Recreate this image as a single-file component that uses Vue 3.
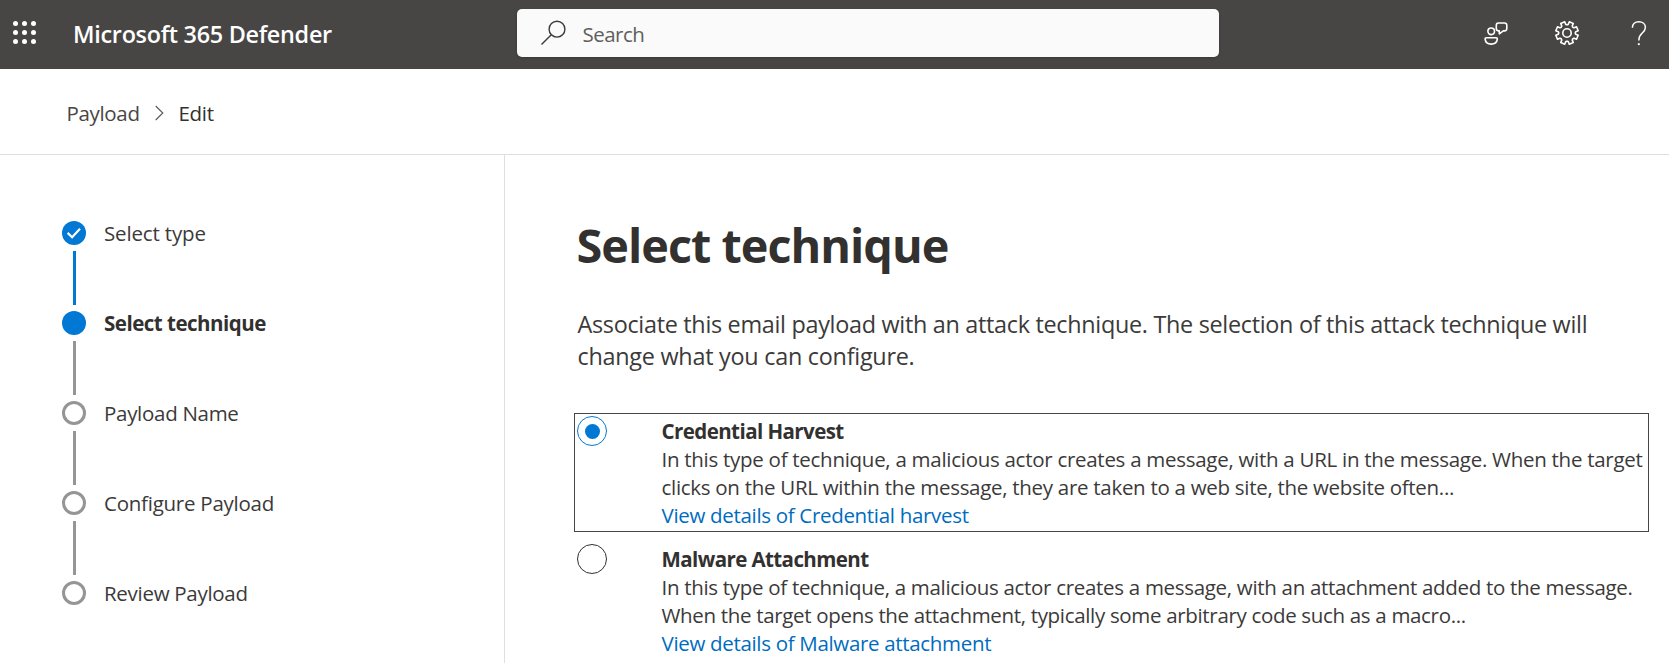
<script setup>
const steps = [
  { label: 'Select type', state: 'done', tracking: -0.16 },
  { label: 'Select technique', state: 'current', tracking: -0.5 },
  { label: 'Payload Name', state: 'todo', tracking: -0.29 },
  { label: 'Configure Payload', state: 'todo', tracking: -0.25 },
  { label: 'Review Payload', state: 'todo', tracking: -0.29 },
]

const intro = [
  { text: 'Associate this email payload with an attack technique. The selection of this attack technique will', tracking: -0.3 },
  { text: 'change what you can configure.', tracking: -0.26 },
]

const options = [
  {
    title: { text: 'Credential Harvest', tracking: -0.57 },
    lines: [
      { text: 'In this type of technique, a malicious actor creates a message, with a URL in the message. When the target', tracking: -0.28 },
      { text: 'clicks on the URL within the message, they are taken to a web site, the website often...', tracking: -0.29 },
    ],
    link: { text: 'View details of Credential harvest', tracking: -0.315 },
    checked: true,
  },
  {
    title: { text: 'Malware Attachment', tracking: -0.59 },
    lines: [
      { text: 'In this type of technique, a malicious actor creates a message, with an attachment added to the message.', tracking: -0.306 },
      { text: 'When the target opens the attachment, typically some arbitrary code such as a macro...', tracking: -0.325 },
    ],
    link: { text: 'View details of Malware attachment', tracking: -0.318 },
    checked: false,
  },
]

const spacing = (item) => ({ letterSpacing: item.tracking + 'px' })

// Outline of the settings gear: eight flat teeth around a 24px box.
const gearPath = (() => {
  const points = []
  for (let i = 0; i < 8; i++) {
    const mid = (i * Math.PI) / 4 + Math.PI / 8
    for (const [offset, r] of [[-0.34, 8.3], [-0.24, 8.9], [-0.19, 11.4], [0.19, 11.4], [0.24, 8.9], [0.34, 8.3]]) {
      points.push(`${(12 + r * Math.cos(mid + offset)).toFixed(2)} ${(12 + r * Math.sin(mid + offset)).toFixed(2)}`)
    }
  }
  return 'M' + points.join('L') + 'Z'
})()
</script>

<template>
  <div class="page">
    <header class="topbar">
      <div class="brand">
        <div class="waffle"><i v-for="n in 9" :key="n"></i></div>
        <span class="product">Microsoft 365 Defender</span>
      </div>
      <div class="search">
        <svg width="26" height="26" viewBox="0 0 26 26" fill="none" stroke="#3b3a39" stroke-width="1.4">
          <circle cx="17" cy="9.2" r="7.9" />
          <path d="M11.3 14.8L1.5 24.6" />
        </svg>
        <span>Search</span>
      </div>
      <nav class="actions">
        <svg class="feedback" width="24" height="24" viewBox="0 0 24 24" fill="none" stroke="#fff" stroke-width="1.6" stroke-linejoin="round">
          <circle cx="7.2" cy="9.3" r="3.3" />
          <path d="M2.5 15.8H12Q13.4 15.8 13.3 17.2Q12.8 22.1 7.2 22.1Q1.6 22.1 1.1 17.2Q1 15.8 2.5 15.8Z" />
          <path d="M14.3 1H20.5Q22.8 1 22.8 3.3V6.6Q22.8 8.9 20.5 8.9H19.3L15.3 11.8V8.9H14.3Q12.3 8.7 12.3 6.6V3.3Q12.3 1 14.3 1Z" />
        </svg>
        <svg class="gear" width="24" height="24" viewBox="0 0 24 24" fill="none" stroke="#fff" stroke-width="1.6" stroke-linejoin="round">
          <path :d="gearPath" />
          <circle cx="12" cy="12" r="4.2" />
        </svg>
        <svg class="help" width="16" height="26" viewBox="0 0 16 26" fill="none" stroke="#fff" stroke-width="1.5">
          <path d="M1.4 7.7C1.4 3.8 4 1.7 7.8 1.7S14.4 4 14.4 7.5C14.4 10.3 12.9 11.6 11 13.3C8.9 15.3 7.8 16.7 7.8 20.6" />
          <path d="M7.8 23.2V25.1" stroke-width="1.9" />
        </svg>
      </nav>
    </header>

    <div class="breadcrumb">
      <span class="parent">Payload</span>
      <svg width="9" height="16" viewBox="0 0 9 16" fill="none" stroke="#605e5c" stroke-width="1.2"><path d="M.7 1L7.8 8L.7 15" /></svg>
      <span class="here">Edit</span>
    </div>

    <div class="body">
      <aside class="steps">
        <template v-for="(step, i) in steps" :key="step.label">
          <div class="step">
            <span class="marker" :class="step.state">
              <svg v-if="step.state === 'done'" width="24" height="24" viewBox="0 0 24 24" fill="none" stroke="#fff" stroke-width="2.2"><path d="M5.6 11.9L10.1 16.2L18 7.7" /></svg>
            </span>
            <span class="label" :class="step.state" :style="spacing(step)">{{ step.label }}</span>
          </div>
          <div v-if="i < steps.length - 1" class="connector" :class="step.state"></div>
        </template>
      </aside>

      <main class="content">
        <h1>Select technique</h1>
        <p class="intro">
          <span v-for="line in intro" :key="line.text" :style="spacing(line)">{{ line.text }}</span>
        </p>
        <section v-for="option in options" :key="option.title.text" class="option" :class="{ checked: option.checked }">
          <span class="radio"></span>
          <div class="details">
            <strong :style="spacing(option.title)">{{ option.title.text }}</strong>
            <span v-for="line in option.lines" :key="line.text" :style="spacing(line)">{{ line.text }}</span>
            <a :style="spacing(option.link)">{{ option.link.text }}</a>
          </div>
        </section>
      </main>
    </div>
  </div>
</template>

<style>
body { margin: 0; overflow: hidden; }
</style>

<style scoped>
.page {
  display: flex; flex-direction: column; width: 1669px; height: 663px; overflow: hidden;
  background: #fff; color: #3b3a39; font: 20.5px/24px "Open Sans", "Noto Sans", sans-serif;
}
.page * { box-sizing: border-box; }
svg { display: block; flex: none; }
.topbar { display: flex; flex: none; height: 69px; background: #484644; }
.brand { display: flex; width: 517px; padding-left: 13px; }
.waffle { display: grid; grid-template-columns: repeat(3, 5px); grid-auto-rows: 5px; gap: 4px; margin-top: 21px; height: 23px; }
.waffle i { border-radius: 50%; background: #fff; }
.product { margin-left: 37px; color: #fff; font-size: 23.4px; font-weight: 600; line-height: 68px; letter-spacing: -.29px; white-space: nowrap; }
.search {
  display: flex; align-items: flex-start; width: 702px; height: 48px; margin-top: 9px; border-radius: 5px;
  background: #fafafa; box-shadow: 0 1px 3px rgba(0, 0, 0, .2); color: #605e5c;
}
.search svg { margin: 11px 0 0 23px; }
.search span { margin-left: 16.5px; padding-top: 1px; line-height: 48px; letter-spacing: -.51px; }
.actions { display: flex; flex: 1; align-items: flex-start; color: #fff; }
.feedback { margin: 22px 0 0 264.5px; }
.gear { margin: 21px 0 0 47.5px; }
.help { margin: 20px 0 0 51.5px; }
.breadcrumb { display: flex; flex: none; height: 86px; padding: 32px 0 0 66.5px; border-bottom: 1px solid #e1dfdd; }
.breadcrumb svg { margin: 4px 14.5px 0 16px; }
.parent { width: 72.5px; color: #484644; letter-spacing: -.33px; }
.here { color: #323130; letter-spacing: -.3px; }
.body { display: flex; flex: 1; min-height: 0; }
.steps { width: 505px; flex: none; padding: 66px 0 0 62px; border-right: 1px solid #e1dfdd; }
.step { display: flex; height: 24px; }
.marker { width: 24px; height: 24px; border-radius: 50%; background: #0078d4; }
.marker.todo { border: 3px solid #979593; background: #fff; }
.label { margin-left: 18px; white-space: nowrap; }
.label.current { color: #323130; font-weight: 700; }
.connector { width: 3px; height: 54px; margin: 6px 0 6px 11px; background: #979593; }
.connector.done { background: #0078d4; }
.content { flex: 1; padding: 58px 20px 0 69px; }
h1 { margin: 0 0 0 2.5px; color: #323130; font-size: 46.8px; font-weight: 700; line-height: 64px; letter-spacing: -.99px; }
.intro { display: flex; flex-direction: column; margin: 31px 0 41px 3.5px; font-size: 23.4px; line-height: 32px; white-space: nowrap; }
.option { display: flex; height: 119px; margin-bottom: 9px; padding: 2px; border: 1px solid transparent; }
.option.checked { border-color: #484644; }
.radio { flex: none; width: 30px; height: 30px; border: 1px solid #323130; border-radius: 50%; }
.checked .radio { display: grid; place-items: center; border-color: #0078d4; }
.checked .radio::after { content: ""; width: 15px; height: 15px; border-radius: 50%; background: #0078d4; }
.details { display: flex; flex-direction: column; margin: 1px 0 0 54.5px; line-height: 28px; white-space: nowrap; }
.details strong { color: #323130; font-weight: 700; }
.details a { color: #006cbe; }
</style>
